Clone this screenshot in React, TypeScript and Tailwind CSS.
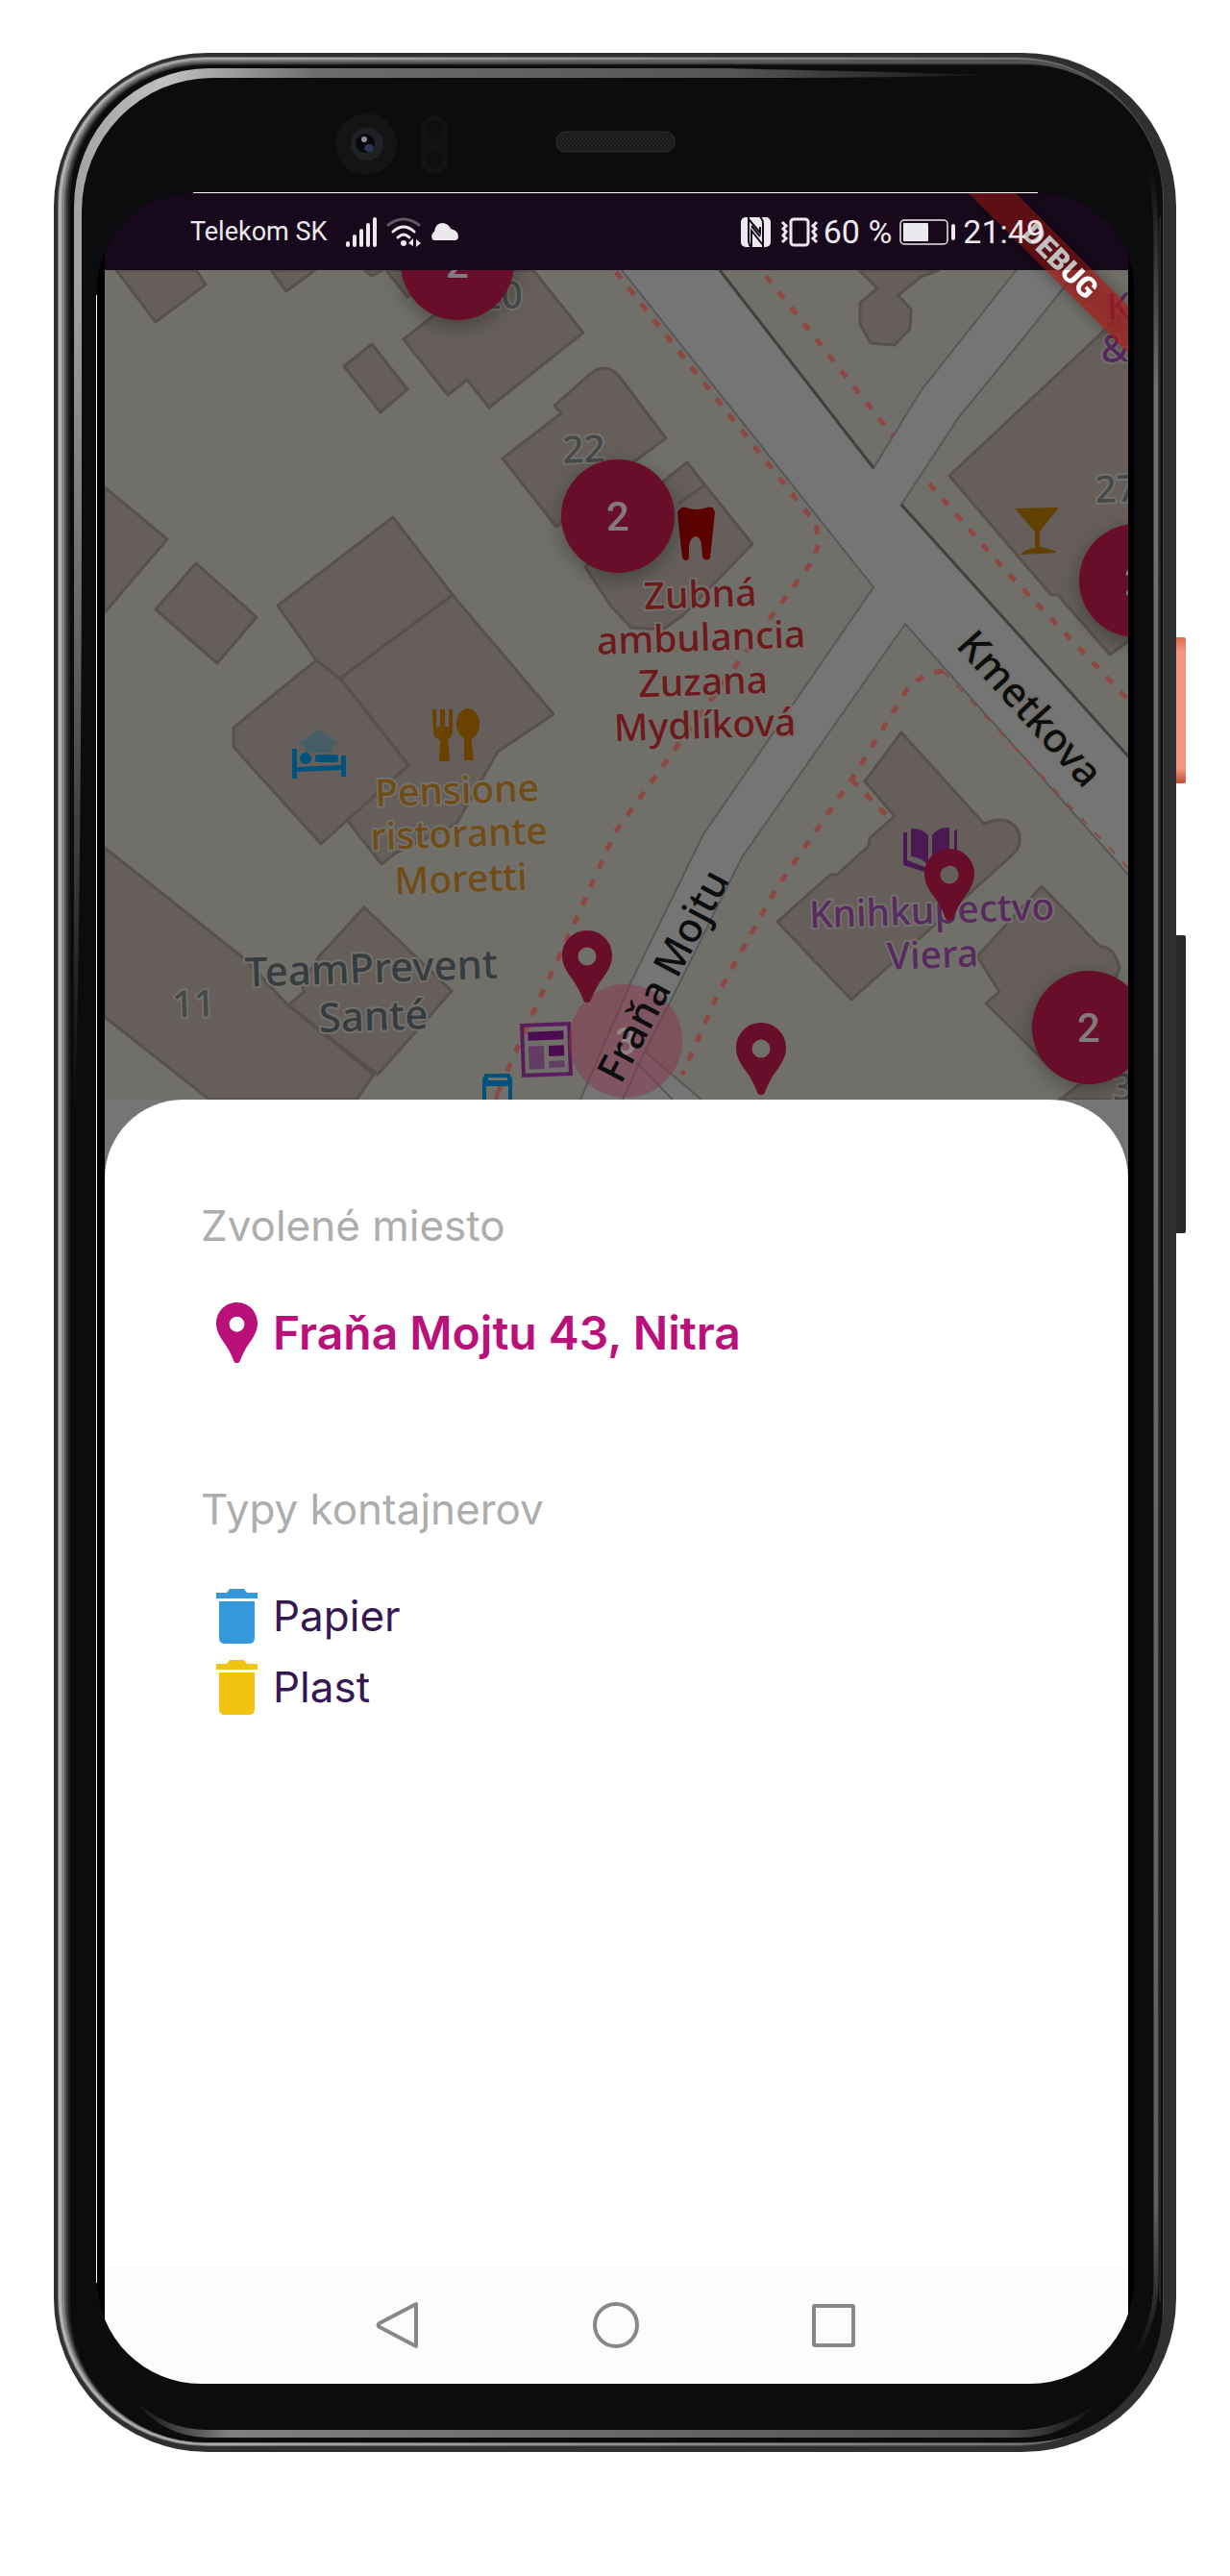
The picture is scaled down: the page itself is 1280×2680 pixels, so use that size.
import React from "react";

/* Map features use one coordinate space: x 109..1174, y 281..1144. */
const MAP = { x: 109, y: 281, w: 1065, h: 863 };

const buildings = [
  "121,281 162,335 214,296 204,281",
  "282,281 298,303 328,281",
  "379,281 387,287 398,281",
  "402,281 424,309 436,302 453,327 420,353 466,411 486,395 509,424 607,346 555,281",
  "387,358 424,405 396,429 358,381",
  "609,590 636,631 657,653 690,655 711,640 783,566 715,481 663,523",
  "109,507 174,561 109,637",
  "204,586 267,642 226,690 162,634",
  "409,538 289,630 329,687 354,706 471,619",
  "471,619 576,743 518,782 475,857 411,888 397,899 361,853 425,796 354,706",
  "329,687 243,757 243,777 334,878 425,796 354,706",
  "379,944 332,995 314,1024 316,1032 300,1046 393,1118 470,1031",
  "109,882 255,998 300,1046 389,1118 371,1144 218,1144 109,1058",
  "894,281 913,300 895,315 895,337 906,357 931,359 947,342 948,322 935,307 958,288 977,281",
  "1180,313 1151,342 988,495 1069,590 1094,619 1101,619 1155,681 1180,663",
  "1180,1107 1122,1129 1103,1144 1180,1144",
];

const buildingPaths = [
  "M577 422L614 389Q630 376 644 391L693 456L663 478L579 548L523 477L584 430Z",
  "M938 762L1024 857Q1052 845 1061 868Q1062 882 1055 888L1013 926L886 1040L809 959L864 910L871 910L904 880L905 872L931 849L900 813Z",
  "M1084 922L1145 985Q1159 984 1165 1007L1145 1060L1092 1110L1073 1090L1026 1044L1040 1032L1017 995Z",
];

const dashes = [
  "M641 283L849 545L852 567L843 587L800 645L766 692L697 787L640 866L593 971L545 1075L518 1137",
  "M797 287L929 453",
  "M967 503L1043 590L1176 730",
  "M981 698L965 701L946 714L886 811L808 924L747 1034L710 1118",
  "M886 811L929 855",
];

type LabelProps = {
  x: number;
  y: number;
  fill: string;
  size?: number;
  anchor?: "start" | "middle" | "end";
  rotate?: number;
  children: React.ReactNode;
};

function Label({ x, y, fill, size = 39, anchor = "middle", rotate = -2, children }: LabelProps) {
  return (
    <text
      x={x}
      y={y}
      fill={fill}
      fontSize={size}
      fontWeight={500}
      textAnchor={anchor}
      stroke="#73716b"
      strokeWidth={4}
      strokeLinejoin="round"
      paintOrder="stroke"
      transform={`rotate(${rotate} ${x} ${y})`}
    >
      {children}
    </text>
  );
}

function CityMap() {
  return (
    <svg viewBox="109 281 1065 863" className="block h-auto w-full font-['Noto_Sans',sans-serif]" role="img" aria-label="Mapa">
      <rect x="109" y="281" width="1065" height="863" fill="#706f69" />

      {/* streets */}
      <path
        d="M647 281L909 611L732 868L657 1021L604 1144H730L671 1094L703 1031L772 892L942 649L1176 912V789L997 590L938 525L997 435L1125 277H1060L958 407L909 487L749 281Z"
        fill="#757575"
      />
      <g fill="none" stroke="#575857" strokeWidth="2">
        <path d="M647 281L909 611L732 868L657 1021L604 1144" />
        <path d="M749 281L909 487L958 407L1060 278" />
        <path d="M1125 277L1042 380L997 435L938 525L997 590L1176 789" />
        <path d="M1176 912L942 649L772 892L703 1031L671 1094L730 1144" />
        <path d="M663 1106L700 1144M671 1094L648 1144" />
      </g>
      <path d="M749 281L909 487M938 525L1176 789" stroke="#40423f" strokeWidth="3" fill="none" />

      <g fill="#655e5b" stroke="#58504d" strokeWidth="3" strokeLinejoin="round">
        {buildings.map((p) => (
          <polygon key={p} points={p} />
        ))}
        {buildingPaths.map((d) => (
          <path key={d} d={d} />
        ))}
        <path d="M733 505L706 524" />
      </g>

      <g fill="none" stroke="#8d4841" strokeWidth="5" strokeDasharray="9 12">
        {dashes.map((d) => (
          <path key={d} d={d} />
        ))}
      </g>
      <path d="M981 698L1176 905" stroke="#8d4841" strokeWidth="2" strokeDasharray="9 12" />

      {/* tooth */}
      <path
        d="M705 533Q708 527 714 528Q725 532 736 528Q742 526 744 533L741 561L739 580Q736 585 731 580L730 566Q728 558 724 558Q718 559 717 568L717 581Q713 586 710 580L707 553Z"
        fill="#5c0000"
      />
      {/* cocktail glass */}
      <path d="M1056 529L1102 528L1082 553V569Q1095 571 1100 575L1062 577Q1067 571 1077 570V553Z" fill="#614000" />
      {/* fork and spoon */}
      <g fill="#6a4200">
        <path d="M450 738H454V756H458V738H463V756H467V738H471V762Q470 767 466 769L468 792H457L458 770Q452 768 451 763Z" />
        <ellipse cx="487" cy="753" rx="12" ry="16" />
        <path d="M483 764H490L493 791H483Z" />
      </g>
      {/* guest house */}
      <path d="M331 759L353 774L346 775V783H317V775L309 775Z" fill="#475e68" />
      <g fill="#00527a">
        <path d="M304 779H309V798L355 796V786H360V808H355V801L309 803V810H304Z" />
        <circle cx="318" cy="789" r="6" />
        <rect x="328" y="785" width="24" height="8" rx="3" />
      </g>
      {/* newsstand */}
      <g transform="rotate(-2 568 1092)">
        <rect x="544" y="1066" width="49" height="52" fill="none" stroke="#591c5c" strokeWidth="4" />
        <rect x="550" y="1073" width="37" height="9" fill="#4c0c50" />
        <rect x="550" y="1088" width="16" height="24" fill="#623c63" />
        <rect x="571" y="1088" width="16" height="11" fill="#4c0c50" />
        <rect x="571" y="1104" width="16" height="7" fill="#623c63" />
      </g>
      {/* blue shop */}
      <path d="M505 1117H530L533 1122V1144H502V1122ZM508 1121V1124H528V1121ZM506 1130V1144H529V1130Z" fill="#00527a" fillRule="evenodd" />
      <path d="M514 1144L517 1134L522 1132L518 1144Z" fill="#8d4841" />
      {/* book */}
      <g fill="#4c1a52">
        <path d="M948 862Q959 861 966 869V900Q959 892 948 891ZM970 869Q977 860 988 861V890Q977 891 970 900Z" />
        <path d="M940 866H944V895L968 904L993 893V864L996 863V897L968 909L940 900Z" />
      </g>

      <g>
        <Label x={522} y={321} fill="#45494b">20</Label>
        <Label x={608} y={481} fill="#45494b">22</Label>
        <Label x={1140} y={523} fill="#45494b" anchor="start">27</Label>
        <Label x={202} y={1058} fill="#45494b">11</Label>
        <Label x={1158} y={1145} fill="#45494b" anchor="start">3</Label>
        <Label x={1152} y={333} fill="#582a5f" anchor="start">K</Label>
        <Label x={1146} y={377} fill="#582a5f" anchor="start">&amp;</Label>

        <Label x={729} y={632} fill="#6e191b">Zubná</Label>
        <Label x={730} y={677} fill="#6e191b">ambulancia</Label>
        <Label x={732} y={723} fill="#6e191b">Zuzana</Label>
        <Label x={734} y={768} fill="#6e191b">Mydlíková</Label>

        <Label x={476} y={836} fill="#704c17">Pensione</Label>
        <Label x={478} y={881} fill="#704c17">ristorante</Label>
        <Label x={480} y={928} fill="#704c17">Moretti</Label>

        <Label x={387} y={1022} fill="#363c3f" size={42}>TeamPrevent</Label>
        <Label x={389} y={1072} fill="#363c3f" size={42}>Santé</Label>

        <Label x={970} y={961} fill="#582a5f">Knihkupectvo</Label>
        <Label x={971} y={1007} fill="#582a5f">Viera</Label>

        <circle cx="651" cy="1083" r="59" fill="#8a3650" fillOpacity="0.5" />
        <text x="651" y="1097" fill="#8f8689" fontSize="39" fontWeight="500" textAnchor="middle" fontFamily="Roboto">3</text>

        <Label x={1061} y={747} fill="#0d0d0d" size={42} rotate={48}>Kmetkova</Label>
        <text x="703" y="1022" fill="#0d0d0d" fontSize="42" fontWeight="500" textAnchor="middle" transform="rotate(-62 703 1022)">
          Fraňa Mojtu
        </text>
      </g>
    </svg>
  );
}

const at = (x: number, y: number) => ({
  left: `${((x - MAP.x) / MAP.w) * 100}%`,
  top: `${((y - MAP.y) / MAP.h) * 100}%`,
});

function Cluster({ x, y, count }: { x: number; y: number; count: number }) {
  return (
    <button
      type="button"
      style={at(x, y)}
      className="absolute flex size-[118px] -translate-x-1/2 -translate-y-1/2 items-center justify-center rounded-full bg-[#690e2a] text-[42px] font-medium text-[#837a7f] shadow-[0_6px_20px_rgba(0,0,0,0.3)]"
    >
      {count}
    </button>
  );
}

function PinIcon({ className }: { className: string }) {
  return (
    <svg viewBox="0 0 52 75" className={className} fill="currentColor" preserveAspectRatio="none" aria-hidden="true">
      <path
        fillRule="evenodd"
        d="M26 0C11.500 0 0 11.500 0 26C0 34 3.500 41 8.500 48C14.500 56 18.500 63 21.500 71C22.500 74 24 75 26 75S29.500 74 30.500 71C33.500 63 37.500 56 43.500 48C48.500 41 52 34 52 26C52 11.500 40.500 0 26 0ZM26 17.500A9.500 9.500 0 1 1 26 36.500A9.500 9.500 0 1 1 26 17.500Z"
      />
    </svg>
  );
}

function Pin({ x, y }: { x: number; y: number }) {
  return (
    <button type="button" aria-label="Kontajner" style={at(x, y)} className="absolute -translate-x-1/2 text-[#690e2a]">
      <PinIcon className="h-[75px] w-[52px]" />
    </button>
  );
}

function BinIcon({ className }: { className: string }) {
  return (
    <svg viewBox="0 0 43 57" className={className} fill="currentColor" aria-hidden="true">
      <path d="M0 4H11L14 0H29L32 4H43V10H0Z" />
      <path d="M3 13H40V51Q40 57 34 57H9Q3 57 3 51Z" />
    </svg>
  );
}

function SignalIcon() {
  return (
    <svg viewBox="0 0 33 31" className="h-[31px] w-[33px]" stroke="currentColor" strokeWidth="4" strokeLinecap="round" aria-hidden="true">
      <path d="M2 27V29M9 20V29M16 14V29M23 8V29M30 2V29" />
    </svg>
  );
}

function WifiIcon() {
  return (
    <svg viewBox="0 0 36 31" className="h-[31px] w-9" fill="none" stroke="currentColor" strokeWidth="3" strokeLinecap="round" aria-hidden="true">
      <path d="M2 8Q18 -4 34 8" opacity="0.35" />
      <path d="M7 15Q18 5 29 15" />
      <path d="M12 21Q18 15 24 21" />
      <circle cx="18" cy="27" r="3" fill="currentColor" stroke="none" />
      <path d="M28 22V30L23 27ZM31 31V23L36 27Z" fill="currentColor" stroke="none" />
    </svg>
  );
}

function CloudIcon() {
  return (
    <svg viewBox="0 0 30 18" className="h-[18px] w-[30px]" fill="currentColor" aria-hidden="true">
      <path d="M4 18A4 5 0 0 1 5 9Q6 0 14 0Q20 1 22 6Q30 8 30 14Q30 17 27 18Z" />
    </svg>
  );
}

function NfcIcon() {
  return (
    <svg viewBox="0 0 31 31" className="size-[31px]" aria-hidden="true">
      <rect width="31" height="31" rx="5" fill="currentColor" />
      <g fill="none" stroke="#170a1c" strokeWidth="2">
        <path d="M8 0V24Q8 29 11 31" />
        <path d="M23 31V7Q23 2 20 0" />
        <path d="M8 2L20 16V10M23 29L11 14V31M11 9L20 20" />
      </g>
    </svg>
  );
}

function VibrateIcon() {
  return (
    <svg viewBox="0 0 41 31" className="h-[31px] w-[41px]" fill="none" stroke="currentColor" strokeWidth="3" aria-hidden="true">
      <rect x="11" y="2" width="18" height="27" rx="3" />
      <path d="M2 5L6 9L3 12L6 15L3 19L6 22L2 26M38 5L34 9L37 12L34 15L37 19L34 22L38 26" />
    </svg>
  );
}

function BatteryIcon() {
  return (
    <svg viewBox="0 0 58 27" className="h-[27px] w-[58px]" aria-hidden="true">
      <rect x="1" y="1" width="49" height="25" rx="4" fill="none" stroke="currentColor" strokeWidth="1.500" />
      <rect x="4" y="4" width="26" height="19" rx="1" fill="currentColor" />
      <rect x="54" y="5" width="4" height="17" rx="2" fill="currentColor" />
    </svg>
  );
}

function StatusBar() {
  return (
    <header className="relative z-20 flex h-20 items-center justify-between bg-black/25 pl-[89px] pr-[87px] text-[#ece9ee]">
      <div className="flex items-center">
        <span className="text-[27px]">Telekom SK</span>
        <div className="ml-5 flex items-center gap-[9px]">
          <SignalIcon />
          <WifiIcon />
          <CloudIcon />
        </div>
      </div>
      <div className="flex items-center text-[34px]">
        <NfcIcon />
        <span className="ml-2.5">
          <VibrateIcon />
        </span>
        <span className="ml-1">60 %</span>
        <span className="ml-2 mr-2">
          <BatteryIcon />
        </span>
        <time>21:49</time>
      </div>
    </header>
  );
}

function DebugBanner() {
  return (
    <svg
      viewBox="0 0 166 166"
      className="pointer-events-none absolute right-0 top-0 z-10 size-[166px] overflow-visible drop-shadow-[0_0_8px_rgba(0,0,0,0.5)]"
      aria-hidden="true"
    >
      <path d="M0 0H49L166 117V166Z" fill="#b71c1c" fillOpacity="0.63" />
      <text x="96" y="70" transform="rotate(45 96 70)" dy="11" textAnchor="middle" fill="#fff" fontSize="30" fontWeight="900">
        DEBUG
      </text>
    </svg>
  );
}

/* Phone body: rim, reflections, camera, speaker and side keys. */
function Bezel() {
  const rim: [number, number, number, number, string][] = [
    [4, 4, 1155, 2490, "url(#rimA)"],
    [5, 5, 1155, 2489, "url(#rimB)"],
    [8, 7, 1155, 2487, "url(#rimC)"],
    [11, 9, 1154, 2486, "#555556"],
    [13, 11, 1154, 2486, "#363637"],
    [15, 12, 1154, 2486, "#1c1c1d"],
    [17, 13, 1154, 2486, "#0c0c0e"],
  ];
  return (
    <svg
      viewBox="0 0 1168 2496"
      preserveAspectRatio="none"
      className="pointer-events-none absolute inset-0 size-full overflow-visible"
      aria-hidden="true"
    >
      <defs>
        <linearGradient id="rimA">
          <stop offset="0" stopColor="#777" />
          <stop offset="1" stopColor="#444" />
        </linearGradient>
        <linearGradient id="rimB">
          <stop offset="0" stopColor="#b4b4b4" />
          <stop offset="1" stopColor="#6a6a6a" />
        </linearGradient>
        <linearGradient id="rimC">
          <stop offset="0" stopColor="#858585" />
          <stop offset="1" stopColor="#444" />
        </linearGradient>
        <linearGradient id="top" gradientUnits="userSpaceOnUse" x1="20" y1="0" x2="1000" y2="0">
          <stop offset="0" stopColor="#a2a2a2" />
          <stop offset="0.100" stopColor="#c0c0c0" />
          <stop offset="0.260" stopColor="#6c6c6c" />
          <stop offset="0.700" stopColor="#555" />
          <stop offset="1" stopColor="#0c0c0e" />
        </linearGradient>
        <linearGradient id="side" x1="0" y1="0" x2="0" y2="1">
          <stop offset="0" stopColor="#a2a2a2" />
          <stop offset="0.300" stopColor="#777" />
          <stop offset="1" stopColor="#0c0c0e" />
        </linearGradient>
        <linearGradient id="right" gradientUnits="userSpaceOnUse" x1="0" y1="120" x2="0" y2="2400">
          <stop offset="0" stopColor="#0c0c0e" />
          <stop offset="0.100" stopColor="#707070" />
          <stop offset="0.930" stopColor="#606060" />
          <stop offset="1" stopColor="#0c0c0e" />
        </linearGradient>
        <linearGradient id="bottom">
          <stop offset="0" stopColor="#0c0c0e" />
          <stop offset="0.100" stopColor="#808082" />
          <stop offset="0.900" stopColor="#505050" />
          <stop offset="1" stopColor="#0c0c0e" />
        </linearGradient>
        <linearGradient id="keyA" x1="0" y1="0" x2="0" y2="1">
          <stop offset="0" stopColor="#df6c54" />
          <stop offset="0.100" stopColor="#f2967d" />
          <stop offset="0.900" stopColor="#f2967d" />
          <stop offset="1" stopColor="#bf4c38" />
        </linearGradient>
        <pattern id="mesh" width="4" height="4" patternUnits="userSpaceOnUse">
          <rect width="4" height="4" fill="#181818" />
          <path d="M0 0L4 4M4 0L0 4" stroke="#242424" />
        </pattern>
      </defs>

      <rect x="1160" y="608" width="18" height="152" rx="2" fill="url(#keyA)" />
      <rect x="1160" y="918" width="18" height="310" rx="2" fill="#282828" />

      <rect width="1168" height="2496" rx="160" fill="#303030" />
      {rim.map(([x1, y1, x2, y2, fill]) => (
        <rect key={x1} x={x1} y={y1} width={x2 - x1} height={y2 - y1} rx={158 - x1} fill={fill} />
      ))}

      <path d="M21 245V160A141 144 0 0 1 162 16H700Q880 20 980 23Q880 26 700 26H165A136 139 0 0 0 29 165V245Z" fill="url(#top)" />
      <path d="M21 244H29V500Q28 900 22 1100H21Z" fill="url(#side)" />
      <path d="M1137 100Q1147 140 1147 200V2320Q1147 2370 1110 2420" fill="none" stroke="url(#right)" strokeWidth="5" />
      <path d="M1151 170V2340" stroke="#242426" strokeWidth="2" />
      <path d="M82 2440Q115 2473 160 2473H1010Q1055 2470 1090 2442Q1055 2481 1005 2481H160Q112 2480 82 2440Z" fill="url(#bottom)" />

      <path d="M145 145H1024" stroke="#fff" transform="translate(0 0.500)" />
      <path d="M44 252V2320" stroke="#fff" transform="translate(0.500 0)" />

      <rect x="523" y="82" width="123" height="21" rx="9" fill="url(#mesh)" stroke="#2c2c2c" />
      <circle cx="325" cy="95" r="32" fill="#141414" />
      <circle cx="326" cy="95" r="17" fill="#202124" />
      <circle cx="324" cy="94" r="10" fill="#08090c" />
      <ellipse cx="328" cy="99" rx="5" ry="4" fill="#2c3654" />
      <circle cx="323" cy="90" r="3" fill="#8d8f94" />
      <rect x="382" y="65" width="28" height="61" rx="14" fill="#131313" />
      <circle cx="396" cy="79" r="9" fill="#0f0f10" />
      <circle cx="396" cy="111" r="9" fill="#0f0f10" />
    </svg>
  );
}

function Container({ name, color }: { name: string; color: string }) {
  return (
    <li className="flex h-[74px] items-center gap-4 pl-3.5">
      <span className={color}>
        <BinIcon className="h-[57px] w-[43px]" />
      </span>
      <span className="text-[44px] leading-[60px] text-[#361752]">{name}</span>
    </li>
  );
}

function PlaceSheet() {
  return (
    <div className="flex-1 bg-[#757575]">
      <section className="min-h-[1214px] rounded-t-[82px] bg-white pl-[100px] pr-8 pt-[101px] font-[Inter,sans-serif]">
        <h2 className="text-[44px] leading-[60px] text-[#adadad]">Zvolené miesto</h2>
        <div className="mt-[50px] flex items-center gap-4 pl-4 text-[#ba1079]">
          <PinIcon className="h-[63px] w-[43px]" />
          <p className="text-[48px] font-semibold leading-[60px]">Fraňa Mojtu 43, Nitra</p>
        </div>
        <h2 className="mt-[122px] text-[44px] leading-[60px] text-[#adadad]">Typy kontajnerov</h2>
        <ul className="mt-11 pl-0.5">
          <Container name="Papier" color="text-[#3498db]" />
          <Container name="Plast" color="text-[#f1c40f]" />
        </ul>
      </section>
    </div>
  );
}

function NavBar() {
  const key = "flex flex-1 items-center justify-center";
  return (
    <nav className="flex h-[122px] bg-[#fcfcfc] px-[18%] text-[#888]">
      <button type="button" aria-label="Späť" className={key}>
        <svg viewBox="0 0 50 50" className="size-[50px]" fill="none" stroke="currentColor" strokeWidth="4" strokeLinejoin="round">
          <path d="M44 3V47L6 27Q3 25 6 23Z" />
        </svg>
      </button>
      <button type="button" aria-label="Domov" className={key}>
        <svg viewBox="0 0 50 50" className="size-[50px]" fill="none" stroke="currentColor" strokeWidth="4">
          <circle cx="25" cy="25" r="22" />
        </svg>
      </button>
      <button type="button" aria-label="Prehľad" className={key}>
        <svg viewBox="0 0 50 50" className="size-[50px]" fill="none" stroke="currentColor" strokeWidth="4">
          <rect x="3" y="5" width="41" height="41" rx="1" />
        </svg>
      </button>
    </nav>
  );
}

export default function App() {
  return (
    <main className="bg-white px-14 pb-[129px] pt-[55px] font-[Roboto,sans-serif]">
      <div className="relative pb-[71px] pl-[45px] pr-11 pt-[146px]">
        <Bezel />
        <div className="relative overflow-hidden rounded-b-[108px] rounded-t-[100px] bg-black pl-2 pr-1.5">
          <div className="relative flex flex-col overflow-hidden bg-[#1f0d25]">
            <StatusBar />
            <DebugBanner />
            <div className="relative overflow-hidden">
              <CityMap />
              <Cluster x={476} y={274} count={2} />
              <Cluster x={643} y={537} count={2} />
              <Cluster x={1182} y={604} count={2} />
              <Cluster x={1133} y={1069} count={2} />
              <Pin x={611} y={968} />
              <Pin x={988} y={883} />
              <Pin x={792} y={1064} />
            </div>
            <PlaceSheet />
            <NavBar />
          </div>
        </div>
      </div>
    </main>
  );
}
